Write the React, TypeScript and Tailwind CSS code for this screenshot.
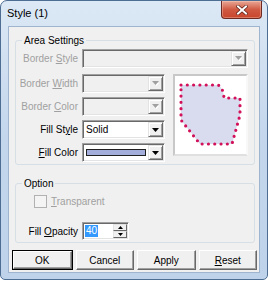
import React from "react";

function Arrow({ disabled }: { disabled?: boolean }) {
  return (
    <div className="w-[15px] h-full flex items-center justify-center bg-[#f0f0f0] border border-t-[#e3e3e3] border-l-[#e3e3e3] border-r-[#696969] border-b-[#696969] shadow-[inset_1px_1px_0_#ffffff,inset_-1px_-1px_0_#a0a0a0]">
      {disabled ? (
        <svg width="7" height="5" viewBox="0 0 7 5">
          <path d="M1,1 H6 L3.5,4 Z" fill="#ffffff" transform="translate(1,1)" />
          <path d="M0,0 H7 L3.5,4 Z" fill="#a0a0a0" />
        </svg>
      ) : (
        <svg width="7" height="4" viewBox="0 0 7 4">
          <path d="M0,0 H7 L3.5,4 Z" fill="#000000" />
        </svg>
      )}
    </div>
  );
}

function Combo({
  wide,
  disabled,
  children,
}: {
  wide?: boolean;
  disabled?: boolean;
  children?: React.ReactNode;
}) {
  return (
    <div
      className={`ml-[4px] h-[19px] flex items-stretch border border-t-[#a0a0a0] border-l-[#a0a0a0] border-r-white border-b-white shadow-[inset_1px_1px_0_#696969,inset_-1px_-1px_0_#e3e3e3] p-[1px] ${
        wide ? "w-[166px]" : "w-[83px]"
      } ${disabled ? "bg-[#f0f0f0]" : "bg-white"}`}
    >
      <div className="flex-1 flex items-center pl-[2px] text-black">{children}</div>
      <Arrow disabled={disabled} />
    </div>
  );
}

function Label({ children, disabled }: { children: React.ReactNode; disabled?: boolean }) {
  return (
    <div
      className={`w-[62px] text-right whitespace-nowrap leading-[13px] ${
        disabled ? "text-[#a0a0a0]" : "text-black"
      }`}
    >
      {children}
    </div>
  );
}

function Btn({ children, def }: { children: React.ReactNode; def?: boolean }) {
  return (
    <div
      className={`flex-1 h-[20px] ${def ? "border border-black" : ""} flex`}
    >
      <div className="flex-1 flex items-center justify-center bg-[#f0f0f0] border border-t-white border-l-white border-r-[#696969] border-b-[#696969] shadow-[inset_-1px_-1px_0_#a0a0a0] text-black">
        {children}
      </div>
    </div>
  );
}

export default function App() {
  return (
    <div className="w-[269px] h-[281px] bg-white font-['Liberation_Sans',Arial,sans-serif] text-[10px] select-none">
      <div className="w-[268px] h-[280px] rounded-t-[7px] rounded-b-[5px] border border-[#4e6d92] bg-gradient-to-b from-[#dce8f5] via-[#c3d6ec] to-[#bed3ea] flex flex-col">
        {/* title bar */}
        <div className="h-[25px] flex items-start justify-between pl-[6px] pr-[5px]">
          <div className="mt-[5px] text-[11px] leading-[14px] text-black">Style (1)</div>
          <div className="w-[41px] h-[18px] rounded-b-[4px] border border-t-0 border-[#6e2a22] bg-gradient-to-b from-[#e7a796] via-[#d05a43] to-[#c8452c] flex items-center justify-center shadow-[inset_0_0_0_1px_rgba(255,220,200,0.35)]">
            <svg width="12" height="10" viewBox="0 0 12 10">
              <path d="M2,1.5 L10,8.5 M10,1.5 L2,8.5" stroke="#5a1d14" strokeWidth="3.4" strokeLinecap="square" />
              <path d="M2,1.5 L10,8.5 M10,1.5 L2,8.5" stroke="#ffffff" strokeWidth="2" strokeLinecap="square" />
            </svg>
          </div>
        </div>
        {/* client area */}
        <div className="mx-[7px] mb-[6px] flex-1 bg-[#f0f0f0] border border-[#9fb4cf] flex flex-col">
          {/* Area Settings */}
          <fieldset className="mt-[7px] ml-[6px] mr-[4px] border border-[#d5dfe5] rounded-[3px] pb-[2px]">
            <legend className="ml-[6px] px-[2px] leading-[13px] text-black">Area Settings</legend>
            <div className="pt-[2px] flex items-center">
              <Label disabled>
                Border <u>S</u>tyle
              </Label>
              <Combo wide disabled />
            </div>
            <div className="mt-[6px] flex">
              <div className="flex flex-col gap-[4px]">
                <div className="flex items-center">
                  <Label disabled>
                    Border <u>W</u>idth
                  </Label>
                  <Combo disabled />
                </div>
                <div className="flex items-center">
                  <Label disabled>
                    Border <u>C</u>olor
                  </Label>
                  <Combo disabled />
                </div>
                <div className="flex items-center">
                  <Label>
                    Fill St<u>y</u>le
                  </Label>
                  <Combo>Solid</Combo>
                </div>
                <div className="flex items-center">
                  <Label>
                    <u>F</u>ill Color
                  </Label>
                  <Combo>
                    <div className="w-[60px] h-[7px] border border-[#202020] bg-[#a3aedb]" />
                  </Combo>
                </div>
              </div>
              <div className="ml-[8px] w-[75px] h-[82px] border-2 border-t-[#c8c8c8] border-l-[#c8c8c8] border-r-[#f8f8f8] border-b-[#e0e0e0] bg-white">
                <svg width="71" height="78" viewBox="0 0 71 78">
                  <path
                    d="M6,9 H43 Q48,11 49,22 H65 V39 L57,68 H25 L6,44 Z"
                    fill="#d9dcef"
                    stroke="#d2115a"
                    strokeWidth="3.2"
                    strokeLinecap="round"
                    strokeLinejoin="round"
                    strokeDasharray="0 6.3"
                  />
                </svg>
              </div>
            </div>
          </fieldset>
          {/* Option */}
          <fieldset className="mt-[12px] ml-[6px] mr-[4px] border border-[#d5dfe5] rounded-[3px] pb-[2px]">
            <legend className="ml-[6px] px-[2px] leading-[13px] text-black">Option</legend>
            <div className="mt-[5px] h-[13px] flex items-center">
              <div className="ml-[18px] w-[13px] h-[13px] border border-[#b1b1b1] bg-[#f4f4f4]" />
              <div className="ml-[4px] text-[#a0a0a0] leading-[13px]">
                <u>T</u>ransparent
              </div>
            </div>
            <div className="mt-[14px] flex items-center">
              <Label>
                Fill <u>O</u>pacity
              </Label>
              <div className="ml-[4px] w-[47px] h-[18px] flex items-stretch bg-white border border-t-[#a0a0a0] border-l-[#a0a0a0] border-r-white border-b-white shadow-[inset_1px_1px_0_#696969,inset_-1px_-1px_0_#e3e3e3] p-[1px]">
                <div className="flex-1 flex items-center pl-[1px]">
                  <span className="bg-[#3399ff] text-white leading-[12px] px-[1px]">40</span>
                </div>
                <div className="w-[14px] flex flex-col">
                  <div className="flex-1 flex items-center justify-center bg-[#f0f0f0] border border-t-[#e3e3e3] border-l-[#e3e3e3] border-r-[#696969] border-b-[#696969]">
                    <svg width="5" height="3" viewBox="0 0 5 3">
                      <path d="M0,3 H5 L2.5,0 Z" fill="#000" />
                    </svg>
                  </div>
                  <div className="flex-1 flex items-center justify-center bg-[#f0f0f0] border border-t-[#e3e3e3] border-l-[#e3e3e3] border-r-[#696969] border-b-[#696969]">
                    <svg width="5" height="3" viewBox="0 0 5 3">
                      <path d="M0,0 H5 L2.5,3 Z" fill="#000" />
                    </svg>
                  </div>
                </div>
              </div>
            </div>
          </fieldset>
          {/* buttons */}
          <div className="mt-[7px] pl-[3px] pr-[2px] flex gap-[3px]">
            <Btn def>OK</Btn>
            <Btn>Cancel</Btn>
            <Btn>Apply</Btn>
            <Btn>
              <u>R</u>eset
            </Btn>
          </div>
        </div>
      </div>
    </div>
  );
}
